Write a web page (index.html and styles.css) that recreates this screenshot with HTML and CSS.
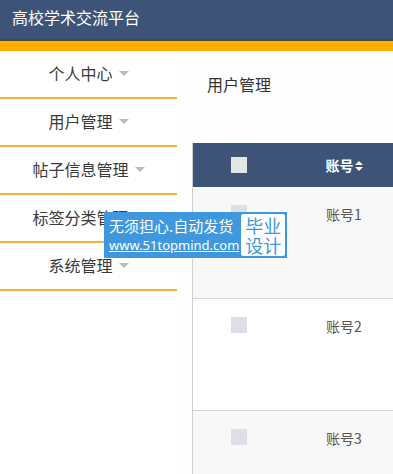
FILE: index.html
```html
<!DOCTYPE html>
<html lang="zh-CN">
<head>
  <meta charset="UTF-8">
  <title>高校学术交流平台</title>
  <link rel="stylesheet" href="styles.css">
</head>
<body>
  <header class="topbar">
    <h1 class="brand">高校学术交流平台</h1>
  </header>
  <div class="stripe"></div>

  <div class="layout">
    <nav class="sidebar">
      <div class="menu-item">个人中心<span class="caret"></span></div>
      <div class="menu-item">用户管理<span class="caret"></span></div>
      <div class="menu-item">帖子信息管理<span class="caret"></span></div>
      <div class="menu-item">标签分类管理<span class="caret"></span></div>
      <div class="menu-item">系统管理<span class="caret"></span></div>
    </nav>

    <main class="content">
      <h2 class="page-title">用户管理</h2>
      <div class="table">
        <div class="row head">
          <div class="cell check"><span class="box"></span></div>
          <div class="cell name">账号<svg class="sort" viewBox="0 0 8 10" fill="currentColor">
              <path d="M4 0L8 4H0z"/>
              <path d="M0 6h8L4 10z"/>
            </svg></div>
        </div>
        <div class="row odd">
          <div class="cell check"><span class="box"></span></div>
          <div class="cell name">账号1</div>
        </div>
        <div class="row">
          <div class="cell check"><span class="box"></span></div>
          <div class="cell name">账号2</div>
        </div>
        <div class="row odd">
          <div class="cell check"><span class="box"></span></div>
          <div class="cell name">账号3</div>
        </div>
      </div>
    </main>
  </div>

  <div class="promo">
    <div class="promo-text">
      <span class="promo-line">无须担心.自动发货</span>
      <a class="promo-link">www.51topmind.com</a>
    </div>
    <div class="promo-tag">毕业<br>设计</div>
  </div>
</body>
</html>
```

FILE: styles.css
```css
* {
  margin: 0;
  padding: 0;
  box-sizing: border-box;
}

body {
  font-family: 'Noto Sans CJK SC', 'Liberation Sans', sans-serif;
  background: #fefefe;
  color: #333;
  overflow: hidden;
  position: relative;
  height: 474px;
}

.topbar {
  height: 41px;
  background: #3d5478;
  border-bottom: 2px solid #4b4a3c;
  padding: 6px 12px 0;
}

.brand {
  font-size: 16px;
  font-weight: 400;
  line-height: 22px;
  color: #fff;
}

.stripe {
  height: 10px;
  background: #ffad00;
}

.layout {
  display: flex;
}

.sidebar {
  width: 177px;
  flex-shrink: 0;
  background: #fff;
}

.menu-item {
  height: 48px;
  border-bottom: 2px solid #f4b13a;
  display: flex;
  align-items: center;
  justify-content: center;
  gap: 6px;
  font-size: 16px;
  color: #3a3a3a;
  padding-bottom: 2px;
}

.caret {
  width: 0;
  height: 0;
  border-left: 5px solid transparent;
  border-right: 5px solid transparent;
  border-top: 5px solid #bbb;
}

.content {
  flex: 1;
  padding: 23px 0 0 15px;
}

.page-title {
  font-size: 16px;
  font-weight: 400;
  line-height: 20px;
  color: #333;
  padding-left: 15px;
  margin-bottom: 49px;
}

.table {
  width: 600px;
  border-left: 1px solid #cfcfcf;
}

.row {
  display: flex;
  height: 112px;
  border-bottom: 1px solid #d6d6d6;
  background: #fff;
}

.row.odd {
  background: #f8f8f8;
}

.row.head {
  height: 44px;
  background: #3d5478;
  border-bottom: none;
  align-items: center;
}

.cell {
  font-size: 14px;
  line-height: 18px;
  color: #555;
}

.row:not(.head) .cell {
  padding-top: 18px;
}

.check {
  width: 91px;
  display: flex;
  justify-content: center;
}

.name {
  width: 120px;
  text-align: center;
}

.head .name {
  color: #fff;
  font-weight: 700;
}

.box {
  display: block;
  width: 16px;
  height: 16px;
  background: #dcdfe3;
}

.head .box {
  background: #e4e5e7;
}

.sort {
  width: 8px;
  height: 10px;
  margin-left: 1px;
}

.promo {
  position: absolute;
  left: 104px;
  top: 212px;
  width: 183px;
  height: 46px;
  background: #3f98dd;
  display: flex;
  align-items: center;
  padding: 2px 2px 2px 5px;
  gap: 2px;
}

.promo-text {
  display: flex;
  flex-direction: column;
  color: #fff;
}

.promo-line {
  font-size: 15px;
  line-height: 20px;
}

.promo-link {
  font-family: 'Noto Sans', 'Liberation Sans', sans-serif;
  font-size: 13px;
  line-height: 19px;
  text-decoration: underline;
  color: #fff;
}

.promo-tag {
  flex: 1;
  height: 42px;
  background: #fff;
  border-radius: 2px;
  color: #3f98dd;
  font-size: 18px;
  line-height: 20px;
  text-align: center;
  padding-top: 1px;
}
```
